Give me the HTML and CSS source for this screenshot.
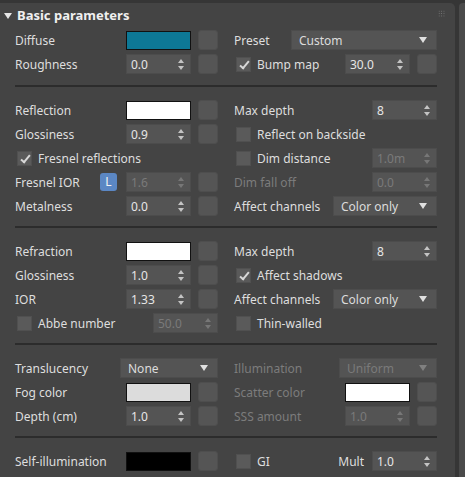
FILE: index.html
```html
<!DOCTYPE html>
<html>
<head>
  <title>Basic parameters</title>
  <link rel="stylesheet" href="styles.css">
</head>
<body>
<div class="frame">
  <div class="panel">
    <div class="rollout-head">
      <span class="caret"></span>
      <span class="rollout-title">Basic parameters</span>
      <span class="grip"></span>
    </div>

    <!-- diffuse -->
    <div class="section first">
      <div class="col">
        <div class="row"><span class="label">Diffuse</span><span class="swatch" style="background:#0d7896"></span><span class="mapbtn"></span></div>
        <div class="row"><span class="label">Roughness</span><span class="spin"><span class="val">0.0</span><span class="arrows"></span></span><span class="mapbtn"></span></div>
      </div>
      <div class="col">
        <div class="row"><span class="label">Preset</span><span class="drop w145"><span class="val">Custom</span><span class="down"></span></span></div>
        <div class="row"><span class="check on"></span><span class="label">Bump map</span><span class="spin"><span class="val">30.0</span><span class="arrows"></span></span><span class="mapbtn"></span></div>
      </div>
    </div>

    <!-- reflection -->
    <div class="section">
      <div class="col">
        <div class="row"><span class="label">Reflection</span><span class="swatch" style="background:#fff"></span><span class="mapbtn"></span></div>
        <div class="row"><span class="label">Glossiness</span><span class="spin"><span class="val">0.9</span><span class="arrows"></span></span><span class="mapbtn"></span></div>
        <div class="row"><span class="check on"></span><span class="label">Fresnel reflections</span></div>
        <div class="row"><span class="label">Fresnel IOR</span><span class="lock">L</span><span class="spin off"><span class="val">1.6</span><span class="arrows"></span></span><span class="mapbtn"></span></div>
        <div class="row"><span class="label">Metalness</span><span class="spin"><span class="val">0.0</span><span class="arrows"></span></span><span class="mapbtn"></span></div>
      </div>
      <div class="col">
        <div class="row"><span class="label">Max depth</span><span class="spin"><span class="val">8</span><span class="arrows"></span></span></div>
        <div class="row"><span class="check"></span><span class="label">Reflect on backside</span></div>
        <div class="row"><span class="check"></span><span class="label">Dim distance</span><span class="spin off"><span class="val">1.0m</span><span class="arrows"></span></span></div>
        <div class="row dim"><span class="label">Dim fall off</span><span class="spin off"><span class="val">0.0</span><span class="arrows"></span></span></div>
        <div class="row"><span class="label">Affect channels</span><span class="drop w104"><span class="val">Color only</span><span class="down"></span></span></div>
      </div>
    </div>

    <!-- refraction -->
    <div class="section">
      <div class="col">
        <div class="row"><span class="label">Refraction</span><span class="swatch" style="background:#fff"></span><span class="mapbtn"></span></div>
        <div class="row"><span class="label">Glossiness</span><span class="spin"><span class="val">1.0</span><span class="arrows"></span></span><span class="mapbtn"></span></div>
        <div class="row"><span class="label">IOR</span><span class="spin"><span class="val">1.33</span><span class="arrows"></span></span><span class="mapbtn"></span></div>
        <div class="row"><span class="check"></span><span class="label">Abbe number</span><span class="spin off"><span class="val">50.0</span><span class="arrows"></span></span></div>
      </div>
      <div class="col">
        <div class="row"><span class="label">Max depth</span><span class="spin"><span class="val">8</span><span class="arrows"></span></span></div>
        <div class="row"><span class="check on"></span><span class="label">Affect shadows</span></div>
        <div class="row"><span class="label">Affect channels</span><span class="drop w104"><span class="val">Color only</span><span class="down"></span></span></div>
        <div class="row"><span class="check"></span><span class="label">Thin-walled</span></div>
      </div>
    </div>

    <!-- translucency -->
    <div class="section">
      <div class="col">
        <div class="row"><span class="label">Translucency</span><span class="drop w98"><span class="val">None</span><span class="down"></span></span></div>
        <div class="row"><span class="label">Fog color</span><span class="swatch" style="background:#dcdcdc"></span><span class="mapbtn"></span></div>
        <div class="row"><span class="label">Depth (cm)</span><span class="spin"><span class="val">1.0</span><span class="arrows"></span></span><span class="mapbtn"></span></div>
      </div>
      <div class="col">
        <div class="row dim"><span class="label">Illumination</span><span class="drop w98 off"><span class="val">Uniform</span><span class="down"></span></span></div>
        <div class="row dim"><span class="label">Scatter color</span><span class="swatch" style="background:#fff"></span><span class="mapbtn"></span></div>
        <div class="row dim"><span class="label">SSS amount</span><span class="spin off"><span class="val">1.0</span><span class="arrows"></span></span><span class="mapbtn"></span></div>
      </div>
    </div>

    <!-- self illumination -->
    <div class="section last">
      <div class="col">
        <div class="row"><span class="label">Self-illumination</span><span class="swatch" style="background:#000"></span><span class="mapbtn"></span></div>
      </div>
      <div class="col">
        <div class="row"><span class="check"></span><span class="label">GI</span><span class="label-r">Mult</span><span class="spin"><span class="val">1.0</span><span class="arrows"></span></span></div>
      </div>
    </div>
  </div>
  <div class="scrollbar"></div>
</div>
</body>
</html>
```

FILE: styles.css
```css
/* dark rollout panel */
body {
  margin: 0;
  background: #363636;
  font-family: "Noto Sans", "Open Sans", sans-serif;
  font-size: 12px;
  color: #dedede;
}

.frame {
  display: flex;
  height: 477px;
  overflow: hidden;
}

.panel {
  width: 455px;
  margin-top: 3px;
  background: #444444;
  border-top-right-radius: 5px;
  flex: none;
}

.scrollbar {
  width: 6px;
  margin: 3px 0 0 4px;
  background: #4a4a4a;
  border-top-left-radius: 4px;
}

.rollout-head {
  height: 24px;
  display: flex;
  align-items: center;
  position: relative;
}

.caret {
  width: 0;
  height: 0;
  margin: 1px 5px 0 4px;
  border-left: 4px solid transparent;
  border-right: 4px solid transparent;
  border-top: 6px solid #e6e6e6;
}

.rollout-title {
  font-weight: bold;
  font-size: 13px;
  color: #f0f0f0;
}

/* 3x3 dots in the corner */
.grip {
  position: absolute;
  right: 10px;
  top: 7px;
  width: 7px;
  height: 7px;
  background-image: radial-gradient(circle, #7a7a7a 0.7px, transparent 0.8px);
  background-size: 2.4px 2.4px;
}

.section {
  display: grid;
  grid-template-columns: 203px 203px;
  column-gap: 16px;
  margin: 0 18px 0 15px;
  padding: 13px 0 10px;
  border-bottom: 2px solid #2c2c2c;
}

.section.first {
  padding: 3px 0 11px;
}

.section.last {
  border-bottom: none;
}

.col {
  display: flex;
  flex-direction: column;
  gap: 4px;
}

.row {
  height: 20px;
  display: flex;
  align-items: center;
}

.label {
  flex: 1;
  white-space: nowrap;
}

.label-r {
  margin-right: 8px;
}

.row.dim .label {
  color: #7c7c7c;
}

.swatch {
  width: 63px;
  height: 17px;
  border: 1px solid #111;
  flex: none;
}

.mapbtn {
  width: 18px;
  height: 18px;
  margin-left: 7px;
  background: #555555;
  border: 1px solid #4e4e4e;
  border-radius: 3px;
  flex: none;
}

.spin {
  width: 65px;
  height: 20px;
  box-sizing: border-box;
  background: #545454;
  border: 1px solid #4c4c4c;
  display: flex;
  align-items: center;
  padding-left: 4px;
  flex: none;
}

.spin .val {
  flex: 1;
  color: #e6e6e6;
}

.spin.off .val {
  color: #7a7a7a;
}

.arrows {
  width: 7px;
  height: 11px;
  margin-right: 5px;
  display: flex;
  flex-direction: column;
  justify-content: space-between;
}

.arrows::before,
.arrows::after {
  content: "";
  width: 0;
  height: 0;
  border-left: 3.5px solid transparent;
  border-right: 3.5px solid transparent;
}

.arrows::before {
  border-bottom: 4px solid #c4c4c4;
}

.arrows::after {
  border-top: 4px solid #c4c4c4;
}

.spin.off .arrows::before {
  border-bottom-color: #777;
}

.spin.off .arrows::after {
  border-top-color: #777;
}

.drop {
  height: 20px;
  box-sizing: border-box;
  background: #545454;
  border: 1px solid #4c4c4c;
  display: flex;
  align-items: center;
  padding: 0 9px 0 7px;
  flex: none;
}

.drop .val {
  flex: 1;
  color: #dcdcdc;
}

.drop.off .val {
  color: #7a7a7a;
}

.down {
  width: 0;
  height: 0;
  border-left: 4.5px solid transparent;
  border-right: 4.5px solid transparent;
  border-top: 6px solid #e0e0e0;
}

.drop.off .down {
  border-top-color: #808080;
}

.w145 { width: 146px; }
.w104 { width: 104px; }
.w98 { width: 98px; }

.check {
  width: 15px;
  height: 15px;
  margin: 0 6px 0 2px;
  background: #5a5a5a;
  border: 1px solid #505050;
  box-sizing: border-box;
  flex: none;
  position: relative;
}

.check.on::after {
  content: "";
  position: absolute;
  left: 5px;
  top: 1px;
  width: 3px;
  height: 8px;
  border-right: 2px solid #d8d8d8;
  border-bottom: 2px solid #d8d8d8;
  transform: rotate(40deg);
}

.lock {
  width: 17px;
  height: 18px;
  margin-right: 9px;
  background: #5b87c4;
  border-radius: 3px;
  color: #f2f2f2;
  text-align: center;
  line-height: 18px;
  flex: none;
}
```
